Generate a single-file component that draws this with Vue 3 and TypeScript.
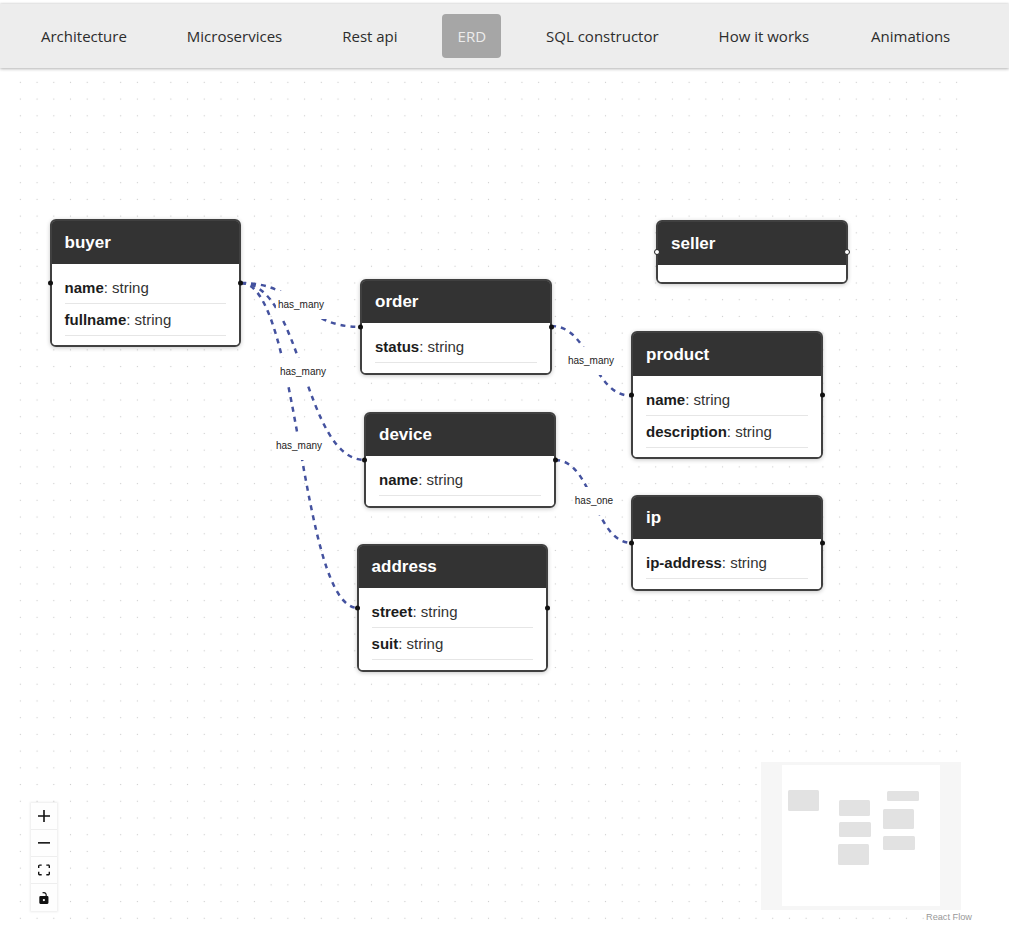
<script setup lang="ts">
interface Field { name: string; type: string }
interface ErdNode { id: string; x: number; y: number; w: number; fields: Field[]; open?: boolean }
interface Edge { from: [number, number]; to: [number, number]; label: string; lx: number; ly: number }

const TOP = 68
const tabs = ['Architecture', 'Microservices', 'Rest api', 'ERD', 'SQL constructor', 'How it works', 'Animations']

const nodes: ErdNode[] = [
  { id: 'buyer', x: 49.6, y: 219.4, w: 191.4, fields: [{ name: 'name', type: 'string' }, { name: 'fullname', type: 'string' }] },
  { id: 'order', x: 360, y: 278.8, w: 192, fields: [{ name: 'status', type: 'string' }] },
  { id: 'device', x: 364, y: 411.8, w: 192, fields: [{ name: 'name', type: 'string' }] },
  { id: 'address', x: 356.6, y: 543.8, w: 191.4, fields: [{ name: 'street', type: 'string' }, { name: 'suit', type: 'string' }] },
  { id: 'seller', x: 656, y: 220, w: 192, fields: [], open: true },
  { id: 'product', x: 631, y: 331.4, w: 192, fields: [{ name: 'name', type: 'string' }, { name: 'description', type: 'string' }] },
  { id: 'ip', x: 631, y: 494.8, w: 192, fields: [{ name: 'ip-address', type: 'string' }] },
]

const edges: Edge[] = [
  { from: [241, 283], to: [361, 327], label: 'has_many', lx: 301, ly: 305 },
  { from: [241, 283], to: [365, 460], label: 'has_many', lx: 303, ly: 372 },
  { from: [241, 283], to: [358, 608], label: 'has_many', lx: 299, ly: 446 },
  { from: [551, 326], to: [632, 396], label: 'has_many', lx: 591, ly: 361 },
  { from: [555, 460], to: [632, 543], label: 'has_one', lx: 594, ly: 501 },
]

function edgePath(e: Edge): string {
  const [x1, y1] = e.from
  const [x2, y2] = e.to
  const m = (x1 + x2) / 2
  return `M${x1},${y1 - TOP} C${m},${y1 - TOP} ${m},${y2 - TOP} ${x2},${y2 - TOP}`
}

const miniNodes = [
  [788, 790, 31, 21], [839, 800, 31, 16], [839, 822, 32, 15], [838, 844, 31, 21],
  [887, 791, 32, 10], [883, 809, 31, 20], [883, 836, 32, 14],
]
</script>

<template>
  <div class="page">
    <nav class="nav">
      <a v-for="t in tabs" :key="t" class="tab" :class="{ active: t === 'ERD' }">{{ t }}</a>
    </nav>
    <main class="flow">
      <div class="dots"></div>

      <svg class="edges" width="1009" height="860">
        <path v-for="(e, i) in edges" :key="i" :d="edgePath(e)" class="edge" />
      </svg>
      <span
        v-for="(e, i) in edges"
        :key="'l' + i"
        class="edge-label"
        :style="{ left: e.lx + 'px', top: e.ly - TOP + 'px' }"
      >{{ e.label }}</span>

      <section
        v-for="n in nodes"
        :key="n.id"
        class="node"
        :style="{ left: n.x + 'px', top: n.y - TOP + 'px', width: n.w + 'px' }"
      >
        <header class="node-head">{{ n.id }}</header>
        <div class="node-body" :class="{ empty: !n.fields.length }">
          <div v-for="f in n.fields" :key="f.name" class="field"><b>{{ f.name }}</b>: {{ f.type }}</div>
        </div>
        <i class="handle left" :class="{ open: n.open }"></i>
        <i class="handle right" :class="{ open: n.open }"></i>
      </section>

      <div class="controls">
        <button class="ctl" type="button" aria-label="zoom in">
          <svg viewBox="0 0 32 32"><path d="M32 18.133H18.133V32h-4.266V18.133H0v-4.266h13.867V0h4.266v13.867H32z" /></svg>
        </button>
        <button class="ctl" type="button" aria-label="zoom out">
          <svg viewBox="0 0 32 5"><path d="M0 0h32v4.2H0z" /></svg>
        </button>
        <button class="ctl" type="button" aria-label="fit view">
          <svg viewBox="0 0 32 30"><path d="M3.692 4.63c0-.53.4-.938.939-.938h5.215V0H4.708C2.13 0 0 2.054 0 4.63v5.216h3.692V4.631zM27.354 0h-5.2v3.692h5.17c.53 0 .984.4.984.939v5.215H32V4.631A4.624 4.624 0 0027.354 0zm.954 24.83c0 .532-.4.94-.939.94h-5.215v3.768h5.215c2.577 0 4.631-2.13 4.631-4.707v-5.139h-3.692v5.139zm-23.677.94c-.531 0-.939-.4-.939-.94v-5.138H0v5.139c0 2.577 2.13 4.707 4.708 4.707h5.138V25.77H4.631z" /></svg>
        </button>
        <button class="ctl" type="button" aria-label="lock">
          <svg viewBox="0 0 25 32"><path d="M21.333 10.667H19.81V7.619C19.81 3.429 16.38 0 12.19 0c-1.6 0-3.2.5-4.4 1.5l1.9 2.3c.7-.5 1.6-.8 2.5-.8 2.59 0 4.572 2.133 4.572 4.571v3.096H3.048A3.056 3.056 0 000 13.714v15.238A3.056 3.056 0 003.048 32h18.285a3.056 3.056 0 003.048-3.048V13.714a3.056 3.056 0 00-3.048-3.047zM12.19 24.533a3.056 3.056 0 01-3.047-3.047 3.056 3.056 0 013.047-3.048 3.056 3.056 0 013.048 3.048 3.056 3.056 0 01-3.048 3.047z" /></svg>
        </button>
      </div>

      <svg class="minimap" width="200" height="148" viewBox="761 762 200 148">
        <rect x="761" y="762" width="200" height="148" fill="#f6f6f6" />
        <rect x="782" y="765" width="158" height="141" fill="#ffffff" />
        <rect
          v-for="(m, i) in miniNodes"
          :key="i"
          :x="m[0]" :y="m[1]" :width="m[2]" :height="m[3]"
          rx="1.5" fill="#e2e2e2"
        />
      </svg>
      <span class="attribution">React Flow</span>
    </main>
  </div>
</template>

<style scoped>
.page {
  width: 1009px;
  height: 928px;
  display: flex;
  flex-direction: column;
  overflow: hidden;
  background: #fff;
  padding-top: 4px;
  box-sizing: border-box;
}
.nav {
  flex: none;
  height: 64px;
  box-sizing: border-box;
  display: flex;
  align-items: center;
  gap: 30px;
  padding-left: 26px;
  background: #ededed;
  box-shadow: 0 1px 3px rgba(0, 0, 0, 0.3), 0 -1px 2px rgba(0, 0, 0, 0.08);
  font-family: "Open Sans", sans-serif;
  font-size: 15px;
  color: #2c2c2c;
  position: relative;
  z-index: 2;
}
.tab {
  height: 44px;
  display: flex;
  align-items: center;
  padding: 0 15px;
  border-radius: 4px;
}
.tab.active {
  background: #a6a6a6;
  color: #ececec;
  padding: 0 15px 0 16px;
  margin-left: -1px;
}
.tab:last-child {
  margin-left: 2px;
}
.flow {
  flex: 1;
  position: relative;
  font-family: "Liberation Sans", Arial, sans-serif;
}
.dots {
  position: absolute;
  left: 12.3px;
  top: 5.6px;
  width: 953px;
  height: 852px;
  background-image: radial-gradient(circle at 8.36px 8.36px, #cccccc 0.7px, transparent 1px);
  background-size: 16.72px 16.72px;
}
.edges {
  position: absolute;
  left: 0;
  top: 0;
  pointer-events: none;
}
.edge {
  fill: none;
  stroke: #44529f;
  stroke-width: 2.5;
  stroke-dasharray: 5;
}
.edge-label {
  position: absolute;
  transform: translate(-50%, -50%);
  font-size: 10px;
  line-height: 12px;
  padding: 8px 2px;
  color: #222;
  background: #fff;
  white-space: nowrap;
}
.node {
  position: absolute;
  box-sizing: border-box;
  border: 2px solid #404040;
  border-radius: 6px;
  background: #fff;
  box-shadow: 0 1px 4px rgba(0, 0, 0, 0.22);
}
.node-head {
  height: 42.6px;
  box-sizing: border-box;
  padding: 0.8px 0 0 13px;
  display: flex;
  align-items: center;
  background: #333;
  color: #fff;
  font-size: 17px;
  font-weight: 700;
  border-radius: 3px 3px 0 0;
}
.node-body {
  padding: 8px 13px 9.4px;
  background: #fff;
  border-radius: 0 0 4px 4px;
}
.node-body.empty {
  padding: 0;
  height: 17.4px;
}
.field {
  height: 32px;
  box-sizing: border-box;
  padding-top: 7px;
  line-height: 17px;
  font-size: 15px;
  color: #333;
  border-bottom: 1px solid #e6e6e6;
}
.field b {
  color: #1c1c1c;
}
.handle {
  position: absolute;
  top: 50%;
  transform: translateY(-50%);
  width: 5px;
  height: 5px;
  border-radius: 50%;
  background: #111;
}
.handle.left { left: -4px; }
.handle.right { right: -4px; }
.handle.open {
  background: #fff;
  border: 1px solid #222;
  box-sizing: content-box;
  width: 4px;
  height: 4px;
}
.controls {
  position: absolute;
  left: 31px;
  top: 735px;
  width: 26px;
  display: flex;
  flex-direction: column;
  box-shadow: 0 0 2px 1px rgba(0, 0, 0, 0.08);
}
.ctl {
  width: 26px;
  height: 27px;
  box-sizing: border-box;
  padding: 5px;
  display: flex;
  align-items: center;
  justify-content: center;
  background: #fefefe;
  border: none;
  border-bottom: 1px solid #eee;
}
.ctl:last-child { border-bottom: none; }
.ctl svg {
  width: 12px;
  height: 12px;
  fill: #111;
}
.minimap {
  position: absolute;
  left: 761px;
  top: 694px;
}
.attribution {
  position: absolute;
  left: 926px;
  top: 843px;
  font-size: 9.2px;
  line-height: 12px;
  color: #999;
  white-space: nowrap;
}
</style>
